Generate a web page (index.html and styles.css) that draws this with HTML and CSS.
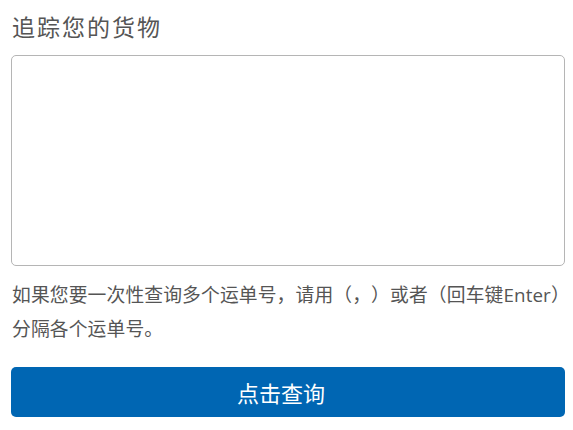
FILE: index.html
```html
<!DOCTYPE html>
<html lang="zh">
<head>
  <meta charset="UTF-8" />
  <meta name="viewport" content="width=device-width, initial-scale=1.0" />
  <title>追踪您的货物</title>
  <link rel="stylesheet" href="styles.css">
</head>
<body>
  <main class="track">
    <h2 class="track-title">追踪您的货物</h2>
    <textarea class="track-input"></textarea>
    <p class="track-tip">如果您要一次性查询多个运单号，请用（，）或者（回车键Enter）分隔各个运单号。</p>
    <button class="track-button">点击查询</button>
  </main>
</body>
</html>
```

FILE: styles.css
```css
body {
  font-family: 'Open Sans', 'Noto Sans CJK SC', sans-serif;
  margin: 0;
  padding: 0;
  background: #fff;
  color: #555;
  text-spacing-trim: space-all;
}

.track {
  padding: 12px 8px 0 11px;
}

.track-title {
  font-size: 23px;
  font-weight: normal;
  letter-spacing: 2px;
  line-height: 30px;
  margin: 0 0 13px 1px;
}

.track-input {
  display: block;
  box-sizing: border-box;
  width: 554px;
  height: 211px;
  border: 1px solid #b5b5b5;
  border-radius: 5px;
  resize: none;
  margin: 0;
}

.track-tip {
  font-size: 18.8px;
  letter-spacing: 0.12px;
  line-height: 34px;
  margin: 12px -8px 21px 1px;
}

.track-button {
  display: block;
  width: 554px;
  height: 50px;
  padding: 0 14px 0 0;
  background: #0066b3;
  color: #fff;
  border: none;
  border-radius: 5px;
  font-family: inherit;
  font-size: 22px;
  cursor: pointer;
}
```
